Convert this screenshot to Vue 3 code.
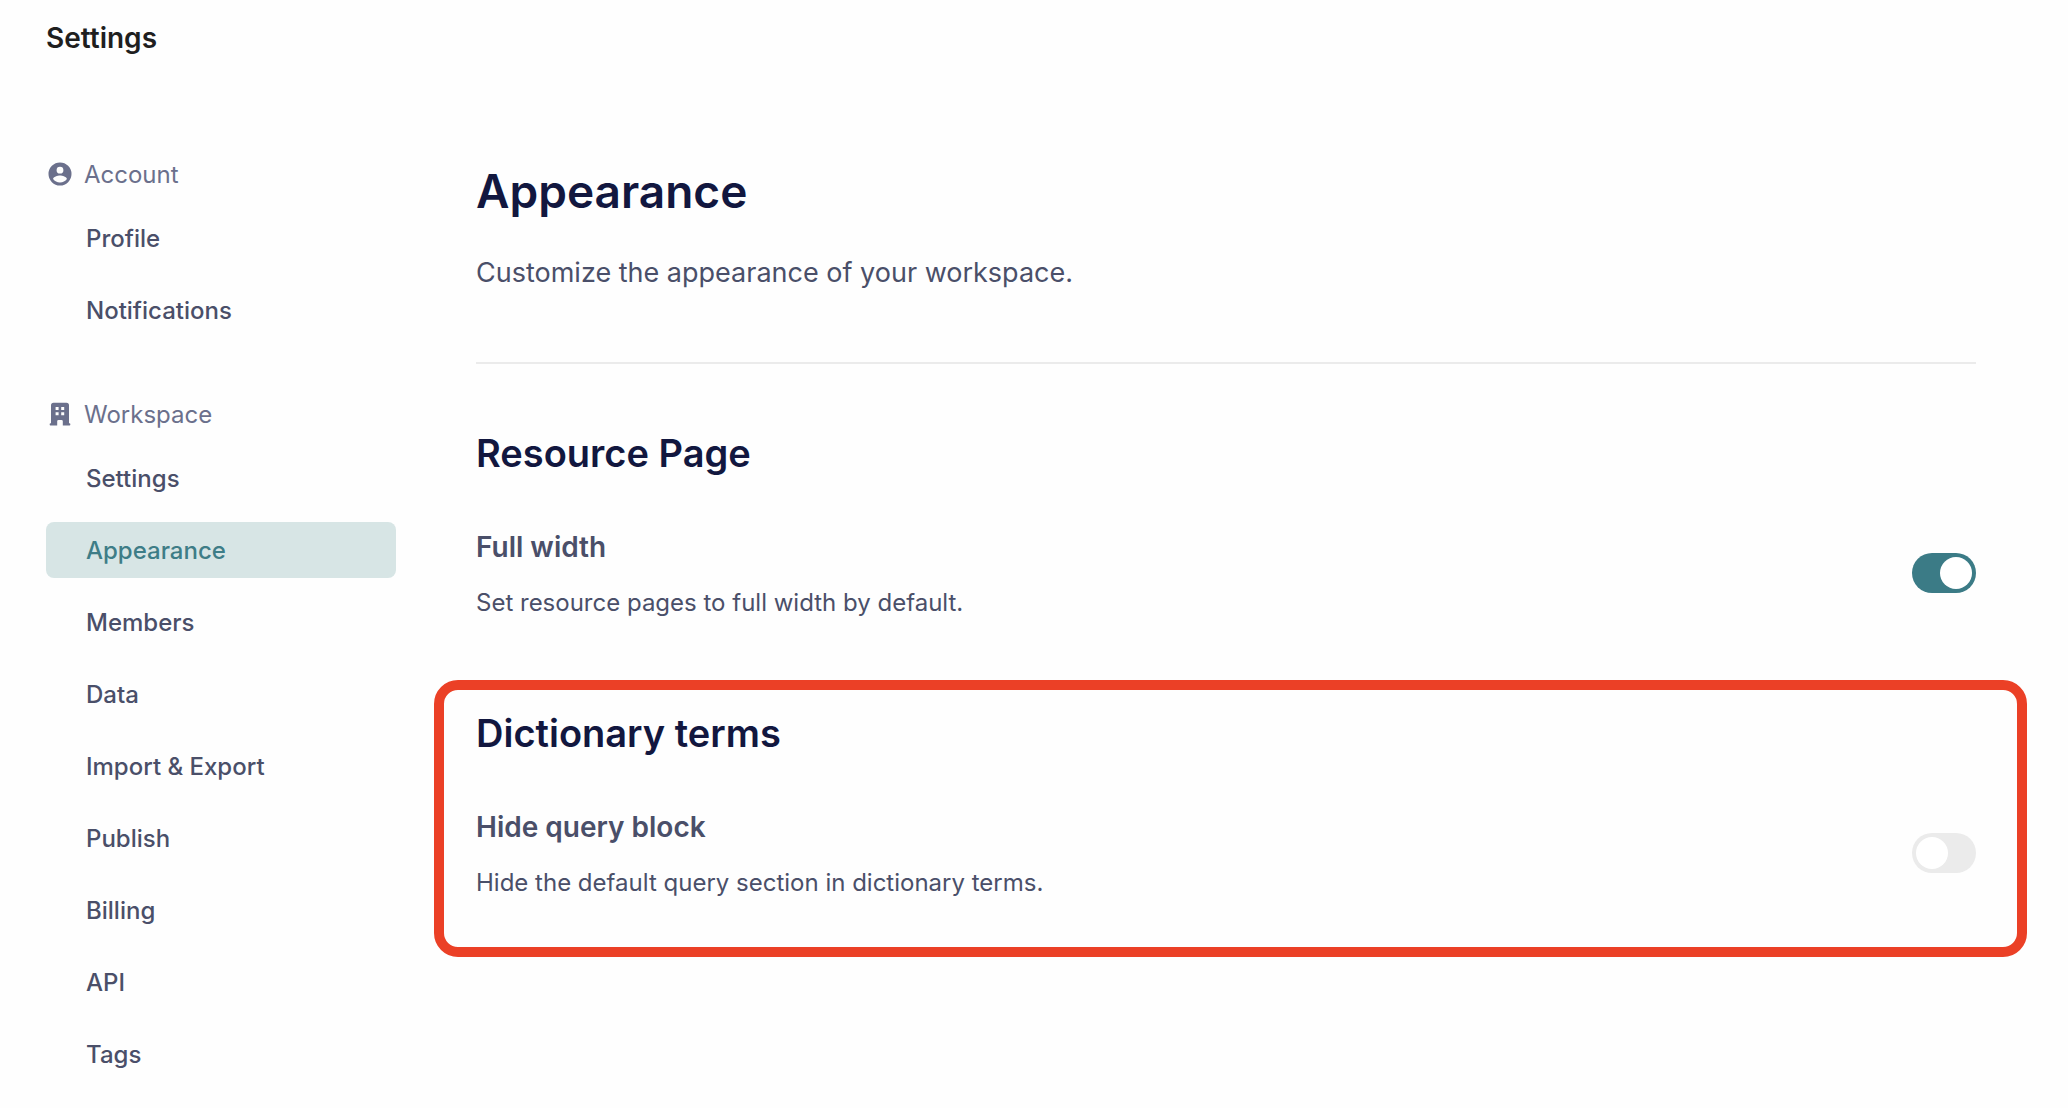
<script setup>
import { ref } from 'vue'

const groups = [
  { title: 'Account', icon: 'user', items: ['Profile', 'Notifications'] },
  {
    title: 'Workspace',
    icon: 'building',
    items: ['Settings', 'Appearance', 'Members', 'Data', 'Import & Export', 'Publish', 'Billing', 'API', 'Tags'],
  },
]
const current = ref('Appearance')

const sections = ref([
  {
    id: 'full-width',
    title: 'Resource Page',
    label: 'Full width',
    text: 'Set resource pages to full width by default.',
    on: true,
    highlighted: false,
  },
  {
    id: 'hide-query',
    title: 'Dictionary terms',
    label: 'Hide query block',
    text: 'Hide the default query section in dictionary terms.',
    on: false,
    highlighted: true,
  },
])
</script>

<template>
  <div class="page">
    <header class="topbar">Settings</header>
    <div class="layout">
      <nav class="sidebar" aria-label="Settings">
        <section v-for="group in groups" :key="group.title" class="group">
          <h2 class="group-title">
            <svg v-if="group.icon === 'user'" class="icon" viewBox="0 0 28 28" aria-hidden="true">
              <path
                fill-rule="evenodd"
                d="M14 2.5a11.5 11.5 0 1 0 0 23a11.5 11.5 0 1 0 0-23zM14 6.8a3.4 3.4 0 1 1 0 6.8a3.4 3.4 0 1 1 0-6.8zM14 22.6c-2.9 0-5.4-1.4-6.9-3.6c0-2.2 4.6-3.5 6.9-3.5s6.9 1.3 6.9 3.5c-1.5 2.2-4 3.6-6.9 3.6z"
              />
            </svg>
            <svg v-else class="icon" viewBox="0 0 28 28" aria-hidden="true">
              <path
                fill-rule="evenodd"
                d="M7.5 2.7h13a2.5 2.5 0 0 1 2.5 2.5v18h.5a.8.8 0 0 1 .8.8v.7a.8.8 0 0 1-.8.8h-6.7v-4.3a1.3 1.3 0 0 0-1.3-1.3h-3a1.3 1.3 0 0 0-1.3 1.3v4.3H4.5a.8.8 0 0 1-.8-.8V24a.8.8 0 0 1 .8-.8H5v-18a2.5 2.5 0 0 1 2.5-2.5zM9.6 6.9v3h3v-3zM15.2 6.9v3h3v-3zM9.6 12.3v3h3v-3zM15.2 12.3v3h3v-3z"
              />
            </svg>
            {{ group.title }}
          </h2>
          <ul class="items">
            <li v-for="item in group.items" :key="item">
              <a
                href="#"
                class="item"
                :class="{ active: item === current }"
                :aria-current="item === current ? 'page' : undefined"
                @click.prevent="current = item"
              >{{ item }}</a>
            </li>
          </ul>
        </section>
      </nav>

      <main class="content">
        <div class="intro">
          <h1>Appearance</h1>
          <p>Customize the appearance of your workspace.</p>
        </div>
        <section
          v-for="section in sections"
          :key="section.id"
          class="section"
          :class="{ highlighted: section.highlighted }"
        >
          <h2>{{ section.title }}</h2>
          <div class="row">
            <div class="copy">
              <label :for="section.id">{{ section.label }}</label>
              <p :id="section.id + '-text'">{{ section.text }}</p>
            </div>
            <input
              :id="section.id"
              v-model="section.on"
              class="switch"
              type="checkbox"
              role="switch"
              :aria-describedby="section.id + '-text'"
            />
          </div>
        </section>
      </main>
    </div>
  </div>
</template>

<style>
body {
  margin: 0;
  background: #fefefe;
}
</style>

<style scoped>
.page {
  font-family: Inter, "Liberation Sans", sans-serif;
  color: #4a4f69;
}
h1,
h2,
p,
ul {
  margin: 0;
  padding: 0;
}
.topbar {
  padding: 18px 46px;
  font-size: 28px;
  line-height: 40px;
  font-weight: 600;
  color: #1f1f1f;
}
.layout {
  display: grid;
  grid-template-columns: 350px minmax(0, 1fr);
  gap: 80px;
  padding: 70px 92px 0 46px;
}
.sidebar {
  display: flex;
  flex-direction: column;
  gap: 48px;
}
.group {
  display: flex;
  flex-direction: column;
  gap: 8px;
}
.group-title {
  display: flex;
  align-items: center;
  gap: 10px;
  height: 56px;
  font-size: 24px;
  font-weight: 400;
  color: #6b708c;
}
.icon {
  width: 28px;
  height: 28px;
  fill: #6b708c;
}
.items {
  display: flex;
  flex-direction: column;
  gap: 16px;
  list-style: none;
}
.item {
  display: block;
  padding: 2px 40px 0;
  border-radius: 8px;
  font-size: 24px;
  line-height: 54px;
  font-weight: 500;
  color: #4a4f69;
  text-decoration: none;
}
.item.active {
  background: #d7e5e5;
  color: #3e7d87;
}
.content {
  padding-top: 17px;
}
.intro {
  padding-bottom: 69px;
  margin-bottom: 65px;
  border-bottom: 2px solid #ebebeb;
}
h1 {
  margin-bottom: 34px;
  font-size: 46px;
  line-height: 56px;
  font-weight: 600;
  color: #12173f;
}
.intro p {
  font-size: 27px;
  line-height: 40px;
}
.section {
  position: relative;
}
.section + .section {
  margin-top: 90px;
}
.section h2 {
  margin-bottom: 50px;
  font-size: 38px;
  line-height: 48px;
  font-weight: 600;
  color: #12173f;
}
.row {
  display: flex;
  align-items: center;
  justify-content: space-between;
  gap: 40px;
}
.copy {
  display: flex;
  flex-direction: column;
  gap: 20px;
}
.copy label {
  font-size: 28px;
  line-height: 40px;
  font-weight: 600;
}
.copy p {
  font-size: 24px;
  line-height: 32px;
}
.switch {
  appearance: none;
  flex: none;
  box-sizing: border-box;
  width: 64px;
  height: 40px;
  margin: 0;
  padding: 4px;
  border-radius: 20px;
  background: #ebebeb;
  cursor: pointer;
}
.switch::before {
  content: "";
  display: block;
  width: 32px;
  height: 32px;
  border-radius: 50%;
  background: #fff;
}
.switch:checked {
  background: #3b7b86;
}
.switch:checked::before {
  margin-left: auto;
}
.highlighted::after {
  content: "";
  position: absolute;
  inset: -29px -51px -58px -42px;
  border: 10px solid #eb4026;
  border-radius: 24px;
  pointer-events: none;
}
</style>
